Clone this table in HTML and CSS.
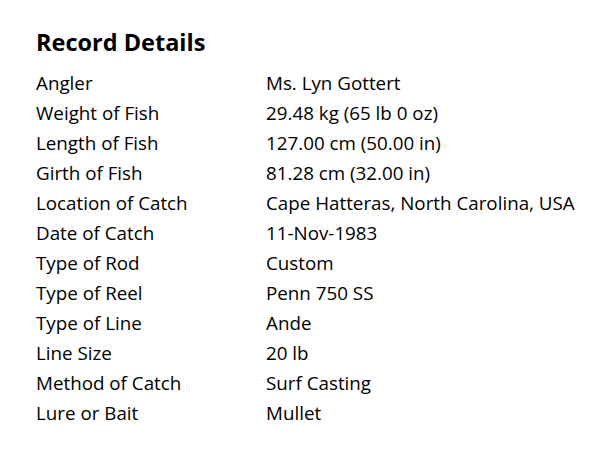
FILE: index.html
```html
<!DOCTYPE html>
<html>
<head>
<meta charset="utf-8">
<link rel="stylesheet" href="styles.css">
</head>
<body>
<div class="card">
  <h2 class="title">Record Details</h2>
  <div class="details">
    <div class="label">Angler</div><div class="value">Ms. Lyn Gottert</div>
    <div class="label">Weight of Fish</div><div class="value">29.48 kg (65 lb 0 oz)</div>
    <div class="label">Length of Fish</div><div class="value">127.00 cm (50.00 in)</div>
    <div class="label">Girth of Fish</div><div class="value">81.28 cm (32.00 in)</div>
    <div class="label">Location of Catch</div><div class="value">Cape Hatteras, North Carolina, USA</div>
    <div class="label">Date of Catch</div><div class="value">11-Nov-1983</div>
    <div class="label">Type of Rod</div><div class="value">Custom</div>
    <div class="label">Type of Reel</div><div class="value">Penn 750 SS</div>
    <div class="label">Type of Line</div><div class="value">Ande</div>
    <div class="label">Line Size</div><div class="value">20 lb</div>
    <div class="label">Method of Catch</div><div class="value">Surf Casting</div>
    <div class="label">Lure or Bait</div><div class="value">Mullet</div>
  </div>
</div>
</body>
</html>
```

FILE: styles.css
```css
html, body {
  margin: 0;
  padding: 0;
  background: #ffffff;
}
body {
  font-family: "Open Sans", "Noto Sans", sans-serif;
  color: #000000;
}
.card {
  padding: 27px 36px;
}
.title {
  margin: 0 0 11px 0;
  font-size: 23.5px;
  font-weight: 700;
  line-height: 30px;
}
.details {
  display: grid;
  grid-template-columns: 230px auto;
  grid-auto-rows: 30px;
  font-size: 18.8px;
  line-height: 30px;
}
.label, .value {
  white-space: nowrap;
}
```
